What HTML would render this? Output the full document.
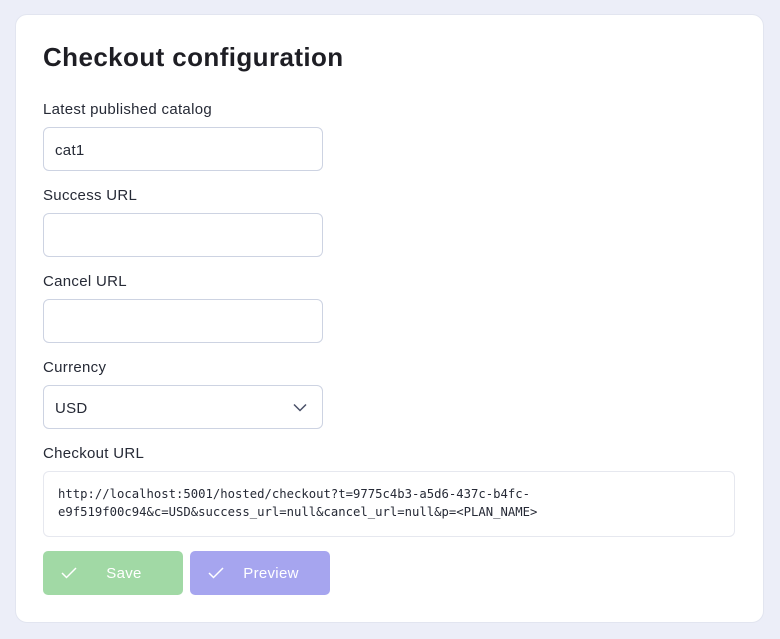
<!DOCTYPE html>
<html><head><style>
*{box-sizing:border-box;margin:0;padding:0}
body{width:780px;height:639px;background:#eceef8;font-family:"Liberation Sans",sans-serif;color:#1f2330;position:relative;overflow:hidden}
.card{position:absolute;left:15px;top:14px;width:749px;height:609px;background:#fff;border-radius:12px;border:1px solid #e2e5f0}
h1{position:absolute;left:43px;top:42px;font-size:26px;font-weight:bold;color:#1e1e24;letter-spacing:0.4px}
.lbl{position:absolute;left:43px;font-size:15px;color:#262a36;letter-spacing:0.3px}
.inp{position:absolute;left:43px;width:280px;height:44px;border:1px solid #cdd3e2;border-radius:6px;font-size:15px;padding:2px 11px 0;line-height:42px;color:#262a36;letter-spacing:0.3px}
.url{position:absolute;left:43px;top:471px;width:692px;height:66px;border:1px solid #e6e8ef;border-radius:6px;font-family:"DejaVu Sans Mono","Liberation Mono",monospace;font-size:12.25px;line-height:18px;padding:13px 14px;color:#262a36}
.btn{position:absolute;top:551px;width:140px;height:44px;border-radius:5px;color:#fff;font-size:15px;line-height:46px;letter-spacing:0.3px}
.btn svg{position:absolute;left:18px;top:15px}
.btn span{position:absolute;left:0;right:0;text-align:center;padding-left:22px}
</style></head><body>
<div class="card"></div>
<h1>Checkout configuration</h1>
<div class="lbl" style="top:101px">Latest published catalog</div>
<div class="inp" style="top:127px">cat1</div>
<div class="lbl" style="top:187px">Success URL</div>
<div class="inp" style="top:213px"></div>
<div class="lbl" style="top:273px">Cancel URL</div>
<div class="inp" style="top:299px"></div>
<div class="lbl" style="top:359px">Currency</div>
<div class="inp" style="top:385px">USD
<svg style="position:absolute;right:15px;top:17px" width="14" height="9" viewBox="0 0 14 9"><path d="M1 1.5L7 7.5L13 1.5" fill="none" stroke="#4a5068" stroke-width="1.5"/></svg></div>
<div class="lbl" style="top:445px">Checkout URL</div>
<div class="url">http://localhost:5001/hosted/checkout?t=9775c4b3-a5d6-437c-b4fc-<br>e9f519f00c94&amp;c=USD&amp;success_url=null&amp;cancel_url=null&amp;p=&lt;PLAN_NAME&gt;</div>
<div class="btn" style="left:43px;background:#a1d9a5"><svg width="16" height="14" viewBox="0 0 16 14"><path d="M1 7L5.5 11.5L15 2" fill="none" stroke="#fff" stroke-width="1.5"/></svg><span>Save</span></div>
<div class="btn" style="left:190px;background:#a6a5ef"><svg width="16" height="14" viewBox="0 0 16 14"><path d="M1 7L5.5 11.5L15 2" fill="none" stroke="#fff" stroke-width="1.5"/></svg><span>Preview</span></div>
</body></html>
